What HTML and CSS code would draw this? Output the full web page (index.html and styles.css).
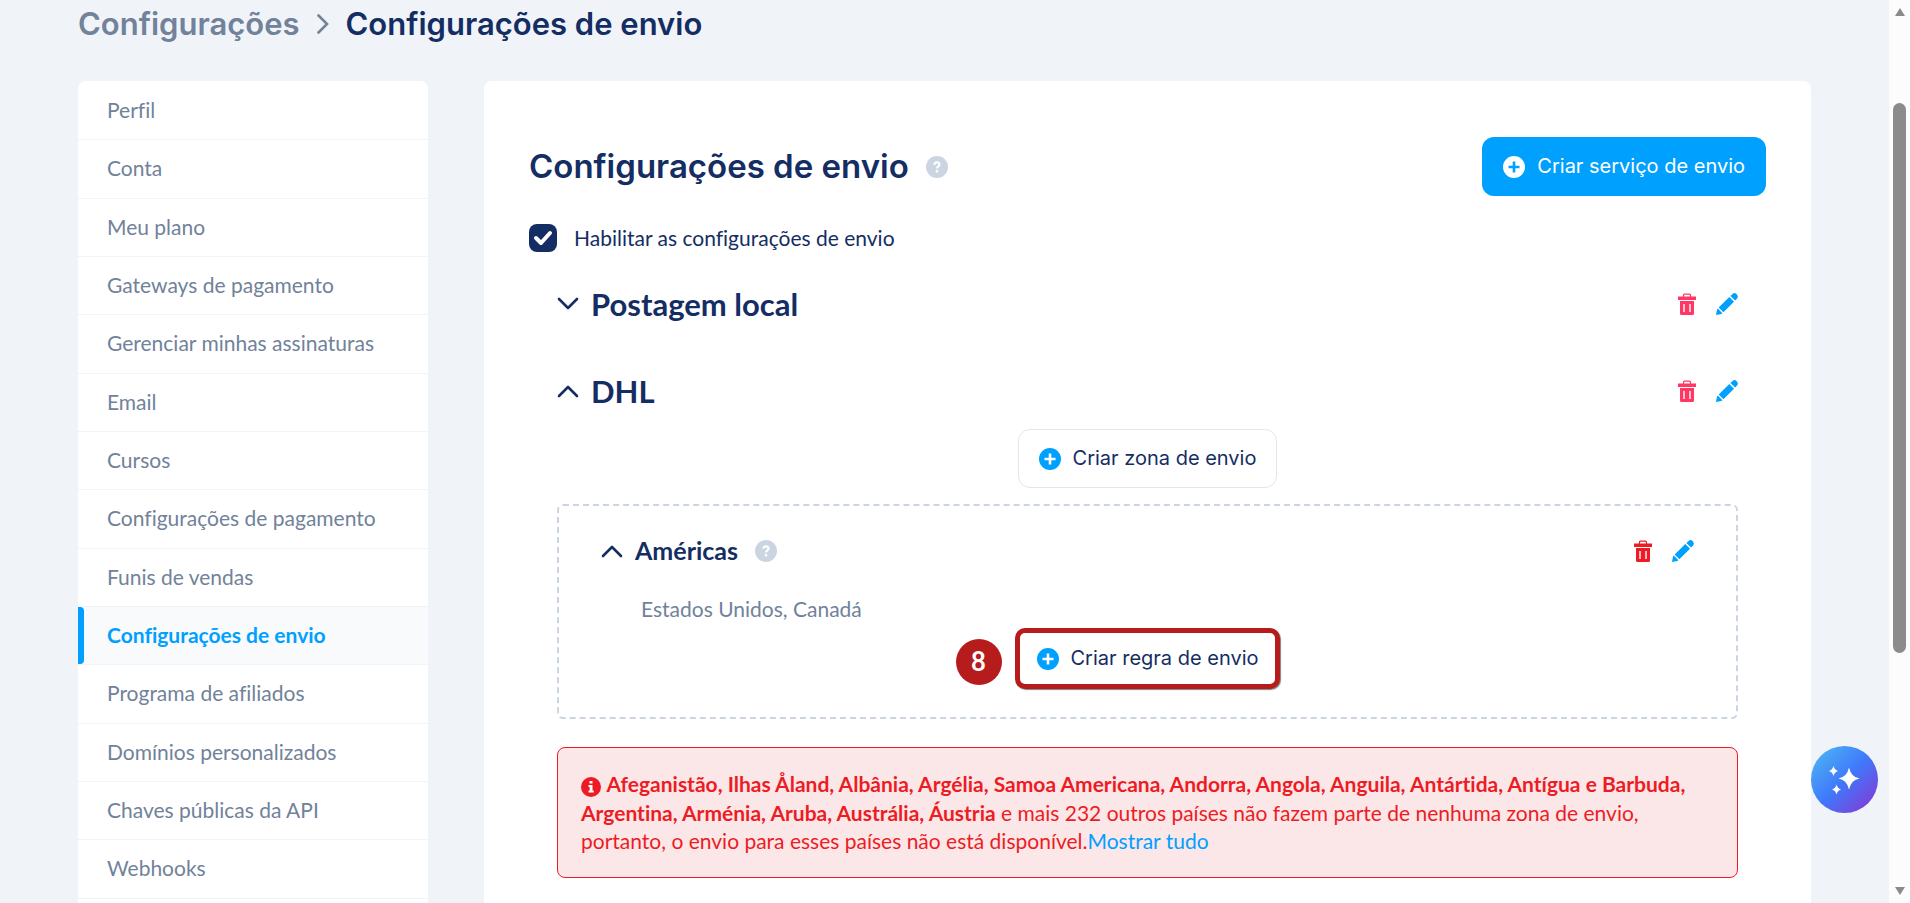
FILE: index.html
```
<!DOCTYPE html>
<html lang="pt">
<head>
    <meta charset="UTF-8">
    <meta name="viewport" content="width=device-width, initial-scale=1.0">
    <title>Configurações de envio</title>
    <link rel="stylesheet" href="styles.css">
</head>
<body>
    <!-- shared icons -->
    <svg class="sprite" aria-hidden="true">
        <symbol id="plus" viewBox="0 0 22 22">
            <path fill-rule="evenodd" d="M11 0a11 11 0 1 0 0 22a11 11 0 0 0 0-22zM9.700 5.500h2.600v4.200h4.200v2.600h-4.200v4.200h-2.600v-4.200h-4.200v-2.600h4.200z"/>
        </symbol>
        <symbol id="help" viewBox="0 0 22 22">
            <circle cx="11" cy="11" r="11" fill="#cbd5e1"/>
            <path d="M8.500 8.800c0-3.200 5-3.200 5-.3c0 1.900-2.500 1.700-2.500 3.900" fill="none" stroke="#fff" stroke-width="2.200"/>
            <rect x="9.800" y="14" width="2.400" height="2.400" fill="#fff"/>
        </symbol>
        <symbol id="chevron" viewBox="0 0 22 22">
            <path d="M2 6l9 9l9-9" fill="none" stroke="currentColor" stroke-width="2.600" stroke-linecap="round" stroke-linejoin="round"/>
        </symbol>
        <symbol id="trash" viewBox="0 0 18 22">
            <path d="M5.500 4V2.200q0-1 1-1h5q1 0 1 1V4" fill="none" stroke="currentColor" stroke-width="1.200"/>
            <path fill="currentColor" fill-rule="evenodd" d="M0 3.600h18v3.400H0zM2 8h14v12.500q0 1.500-1.500 1.500h-11q-1.500 0-1.500-1.500zM5.300 11v8h1.400v-8zM11.300 11v8h1.400v-8z"/>
        </symbol>
        <symbol id="pencil" viewBox="0 0 22 22">
            <path fill="currentColor" d="M13.300 4L18 8.700L7.400 19.300L2.700 14.600zM14.400 2.900L16.600 .9q2.100-1.700 4.100.3q2 2.200.4 4.200L19.100 7.600zM1.800 15.600L6.400 20.200L5.400 21L0 22L1 16.600z"/>
        </symbol>
    </svg>

    <div class="page">
        <nav class="breadcrumb">
            <a href="#">Configurações</a>
            <svg width="12" height="20" viewBox="0 0 12 20"><path d="M1.500 1.500L10 10L1.500 18.500" fill="none" stroke="#71829a" stroke-width="2.600" stroke-linecap="round"/></svg>
            <span>Configurações de envio</span>
        </nav>

        <div class="columns">
            <ul class="menu">
                <li><a href="#">Perfil</a></li>
                <li><a href="#">Conta</a></li>
                <li><a href="#">Meu plano</a></li>
                <li><a href="#">Gateways de pagamento</a></li>
                <li><a href="#">Gerenciar minhas assinaturas</a></li>
                <li><a href="#">Email</a></li>
                <li><a href="#">Cursos</a></li>
                <li><a href="#">Configurações de pagamento</a></li>
                <li><a href="#">Funis de vendas</a></li>
                <li><a href="#" class="active">Configurações de envio</a></li>
                <li><a href="#">Programa de afiliados</a></li>
                <li><a href="#">Domínios personalizados</a></li>
                <li><a href="#">Chaves públicas da API</a></li>
                <li><a href="#">Webhooks</a></li>
            </ul>

            <main class="panel">
                <header class="panel-header">
                    <h1>Configurações de envio</h1>
                    <svg class="icon"><use href="#help"/></svg>
                    <button type="button" class="btn btn-primary"><svg class="icon"><use href="#plus"/></svg>Criar serviço de envio</button>
                </header>

                <div class="enable">
                    <input type="checkbox" id="enable" checked>
                    <label for="enable">Habilitar as configurações de envio</label>
                </div>

                <div class="services">
                    <div class="service">
                        <button type="button" class="toggle" aria-label="Expandir"><svg class="icon"><use href="#chevron"/></svg></button>
                        <h2>Postagem local</h2>
                        <div class="actions">
                            <button type="button" class="delete" aria-label="Excluir"><svg><use href="#trash"/></svg></button>
                            <button type="button" class="edit" aria-label="Editar"><svg><use href="#pencil"/></svg></button>
                        </div>
                    </div>

                    <div class="service">
                        <button type="button" class="toggle open" aria-label="Recolher"><svg class="icon"><use href="#chevron"/></svg></button>
                        <h2>DHL</h2>
                        <div class="actions">
                            <button type="button" class="delete" aria-label="Excluir"><svg><use href="#trash"/></svg></button>
                            <button type="button" class="edit" aria-label="Editar"><svg><use href="#pencil"/></svg></button>
                        </div>
                    </div>

                    <div class="center">
                        <button type="button" class="btn btn-outline"><svg class="icon"><use href="#plus"/></svg>Criar zona de envio</button>
                    </div>

                    <section class="zone">
                        <div class="zone-header">
                            <button type="button" class="toggle open" aria-label="Recolher"><svg class="icon"><use href="#chevron"/></svg></button>
                            <h3>Américas</h3>
                            <svg class="icon"><use href="#help"/></svg>
                            <div class="actions">
                                <button type="button" class="delete red" aria-label="Excluir"><svg><use href="#trash"/></svg></button>
                                <button type="button" class="edit" aria-label="Editar"><svg><use href="#pencil"/></svg></button>
                            </div>
                        </div>
                        <p class="countries">Estados Unidos, Canadá</p>
                        <div class="center">
                            <div class="step">
                                <span class="step-number">8</span>
                                <button type="button" class="btn btn-outline marked"><svg class="icon"><use href="#plus"/></svg>Criar regra de envio</button>
                            </div>
                        </div>
                    </section>

                    <div class="alert">
                        <svg class="info" viewBox="0 0 20 20"><circle cx="10" cy="10" r="10" fill="#ed1c24"/><path d="M8.500 4h3v2.600h-3zM7.500 8h4v5.500h1.200v2h-5.200v-2h1.200v-3.500h-1.200z" fill="#fff"/></svg>
                        <strong>Afeganistão, Ilhas Åland, Albânia, Argélia, Samoa Americana, Andorra, Angola, Anguila, Antártida, Antígua e Barbuda, Argentina, Arménia, Aruba, Austrália, Áustria</strong> e mais 232 outros países não fazem parte de nenhuma zona de envio, portanto, o envio para esses países não está disponível.<a href="#">Mostrar tudo</a>
                    </div>
                </div>
            </main>
        </div>
    </div>

    <button type="button" class="assistant" aria-label="Assistente">
        <svg viewBox="0 0 67 67"><path fill="#fff" d="M38 21.500q2 9.500 10.500 11q-8.500 1.500-10.500 11q-2-9.500-10.500-11q8.500-1.500 10.500-11zM22.500 20q1 4 4.500 5q-3.500 1-4.500 5q-1-4-4.500-5q3.500-1 4.500-5zM25.500 38.500q1 4 4.500 5q-3.500 1-4.500 5q-1-4-4.500-5q3.500-1 4.500-5z"/></svg>
    </button>

    <div class="scrollbar">
        <svg width="10" height="8" viewBox="0 0 10 8"><path d="M5 0L10 8H0z" fill="#8b8b8b"/></svg>
        <div class="thumb"></div>
        <svg width="10" height="8" viewBox="0 0 10 8"><path d="M0 0H10L5 8z" fill="#8b8b8b"/></svg>
    </div>
</body>
</html>
```
FILE: styles.css
```
* {
    box-sizing: border-box;
}
body {
    margin: 0;
    height: 100vh;
    overflow: hidden;
    background-color: #f0f4f9;
    color: #142d63;
    font-family: Lato, sans-serif;
    font-size: 21px;
    font-variant-ligatures: none;
    line-height: 1.35;
}
h1, h2, h3, p, ul {
    margin: 0;
    padding: 0;
}
a {
    color: #00a0ff;
    text-decoration: none;
}
button {
    font: inherit;
    color: inherit;
    cursor: pointer;
}
.sprite {
    display: none;
}
.icon {
    width: 22px;
    height: 22px;
    flex: none;
}
.page {
    padding: 0 99px 0 78px;
}
.breadcrumb {
    display: flex;
    align-items: center;
    gap: 17px;
    height: 48px;
    margin-bottom: 33px;
    font-family: Inter, sans-serif;
    font-size: 31px;
    font-weight: 600;
}
.breadcrumb a {
    color: #71829a;
}
.columns {
    display: flex;
    align-items: flex-start;
    gap: 56px;
}

/* menu */
.menu {
    width: 350px;
    flex: none;
    min-height: 900px;
    padding-top: 1px;
    list-style: none;
    background-color: #fff;
    border-radius: 8px 8px 0 0;
}
.menu a {
    display: block;
    padding: 14px 0 15px 29px;
    border-bottom: 1px solid #f1f3f6;
    color: #71829a;
}
.menu a.active {
    position: relative;
    background-color: #f8fafc;
    color: #00a0ff;
    font-weight: bold;
}
.menu a.active::before {
    content: "";
    position: absolute;
    left: 0;
    top: 0;
    bottom: 0;
    width: 6px;
    background-color: #00a0ff;
    border-radius: 0 4px 4px 0;
}

/* panel */
.panel {
    flex: 1;
    min-height: 900px;
    padding: 56px 45px;
    background-color: #fff;
    border-radius: 8px 8px 0 0;
}
.panel-header {
    display: flex;
    align-items: center;
    gap: 17px;
}
.panel-header h1 {
    font-family: Inter, sans-serif;
    font-size: 33px;
    font-weight: 600;
}
.panel-header .btn {
    margin-left: auto;
}
.btn {
    display: flex;
    align-items: center;
    gap: 12px;
    height: 59px;
    padding: 0 20px;
    border: 1px solid transparent;
    border-radius: 12px;
    font-family: Inter, sans-serif;
    font-size: 20px;
}
.btn-primary {
    background-color: #00a0ff;
    color: #fff;
    fill: #fff;
}
.btn-outline {
    background-color: #fff;
    border-color: #e2e5ea;
    fill: #00a0ff;
}
.enable {
    display: flex;
    align-items: center;
    gap: 17px;
    margin-top: 28px;
}
.enable input {
    appearance: none;
    width: 28px;
    height: 28px;
    margin: 0;
    border-radius: 8px;
    background: #142d63 url("data:image/svg+xml,%3Csvg xmlns='http://www.w3.org/2000/svg' viewBox='0 0 28 28'%3E%3Cpath d='M7 14l5 5L21 9' fill='none' stroke='white' stroke-width='4' stroke-linecap='round' stroke-linejoin='round'/%3E%3C/svg%3E");
}
.services {
    padding: 13px 28px 0;
}
.service {
    display: flex;
    align-items: center;
    gap: 12px;
    height: 77px;
}
.service + .service {
    margin-top: 10px;
}
.service h2 {
    padding-top: 3px;
    font-size: 31px;
}
.toggle {
    display: flex;
    padding: 0;
    background: none;
    border: none;
}
.toggle.open {
    transform: rotate(180deg);
}
.actions {
    display: flex;
    gap: 18px;
    margin-left: auto;
}
.actions button {
    display: flex;
    padding: 0;
    background: none;
    border: none;
}
.actions svg {
    width: 22px;
    height: 22px;
}
.actions .delete {
    color: #ff3864;
}
.actions .red {
    color: #ed1c24;
}
.actions .edit {
    color: #00a0ff;
}
.center {
    display: flex;
    justify-content: center;
}
.zone {
    margin-top: 16px;
    padding: 28px 42px 28px;
    border: 2px dashed #cbd5e1;
    border-radius: 6px;
}
.zone-header {
    display: flex;
    align-items: center;
    gap: 12px;
}
.zone-header h3 {
    margin-right: 5px;
    font-size: 25px;
}
.countries {
    margin: 27px 0 5px 40px;
    color: #71829a;
}
.step {
    position: relative;
}
.step-number {
    position: absolute;
    right: 100%;
    top: 11px;
    width: 46px;
    height: 46px;
    margin-right: 13px;
    border-radius: 50%;
    background-color: #b71c1c;
    color: #fff;
    font-family: Roboto, sans-serif;
    font-size: 27px;
    font-weight: 500;
    line-height: 46px;
    text-align: center;
}
.marked {
    height: 61px;
    padding: 0 17px;
    border: 5px solid #b71c1c;
    border-radius: 10px;
    box-shadow: 1px 1px 1px rgba(0, 0, 0, 0.5);
}
.alert {
    margin-top: 28px;
    padding: 22px 23px;
    border: 1px solid #ed1c24;
    border-radius: 8px;
    background-color: #fce7e8;
    color: #ed1c24;
}
.info {
    width: 20px;
    height: 20px;
    vertical-align: -5px;
}

.assistant {
    position: fixed;
    right: 32px;
    bottom: 90px;
    width: 67px;
    height: 67px;
    padding: 0;
    border: none;
    border-radius: 50%;
    background: linear-gradient(135deg, #4aa8f5 15%, #3f79fb 50%, #7c3fd8 90%);
}
.assistant svg {
    display: block;
}
.scrollbar {
    position: fixed;
    top: 0;
    right: 0;
    bottom: 0;
    display: flex;
    flex-direction: column;
    align-items: center;
    width: 21px;
    padding: 8px 0;
    background-color: #fcfcfc;
}
.thumb {
    width: 13px;
    height: 62%;
    margin: 87px 0 auto;
    border-radius: 7px;
    background-color: #8b8b8b;
}
```
